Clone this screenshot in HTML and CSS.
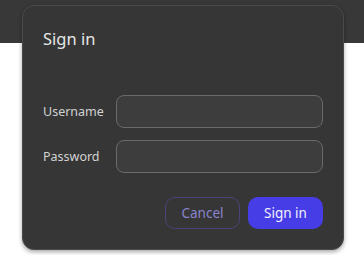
FILE: index.html
```html
<!DOCTYPE html>
<html>
<head>
  <title>Sign in</title>
  <meta charset="UTF-8">
  <link rel="stylesheet" href="styles.css">
</head>
<body>
<div class="topbar"></div>
<div class="dialog">
  <div class="title">Sign in</div>
  <div class="form">
    <label class="label" for="username">Username</label>
    <input type="text" id="username" class="inputText">
    <label class="label" for="password">Password</label>
    <input type="password" id="password" class="inputText">
  </div>
  <div class="actions">
    <button class="buttonCancel">Cancel</button>
    <button class="buttonSignin">Sign in</button>
  </div>
</div>
</body>
</html>
```

FILE: styles.css
```css
body {
  margin: 0;
  background: white;
  font-family: "Noto Sans", "DejaVu Sans", sans-serif;
  width: 364px;
  height: 255px;
  overflow: hidden;
}

.topbar {
  height: 43px;
  background: #383838;
}

.dialog {
  position: absolute;
  left: 22px;
  top: 5px;
  width: 322px;
  height: 245px;
  background: #363636;
  border: 1px solid #4a4a4a;
  border-radius: 12px;
  box-shadow: 0 2px 4px rgba(0,0,0,0.35);
  padding: 0 20px 0 20px;
  box-sizing: border-box;
}

.title {
  margin-top: 20px;
  font-size: 16.5px;
  color: #e6e6e6;
  height: 26px;
  line-height: 26px;
}

.form {
  margin-top: 43px;
  display: grid;
  grid-template-columns: 73px 1fr;
  row-gap: 12px;
  align-items: center;
}

.label {
  font-size: 12.5px;
  color: #d2d2d2;
}

.inputText {
  height: 33px;
  box-sizing: border-box;
  background: #3d3d3d;
  border: 1px solid #6a6a6a;
  border-radius: 8px;
  outline: none;
  color: #eee;
}

.actions {
  margin-top: 24px;
  display: flex;
  justify-content: flex-end;
  gap: 8px;
}

.actions button {
  width: 75px;
  height: 32px;
  border-radius: 10px;
  font-family: "Noto Sans", "DejaVu Sans", sans-serif;
  font-size: 13.5px;
}

.buttonCancel {
  background: transparent;
  border: 1px solid #4a4478;
  color: #8985d0;
}

.buttonSignin {
  background: #473de6;
  border: none;
  color: #f2f2ff;
}
```
